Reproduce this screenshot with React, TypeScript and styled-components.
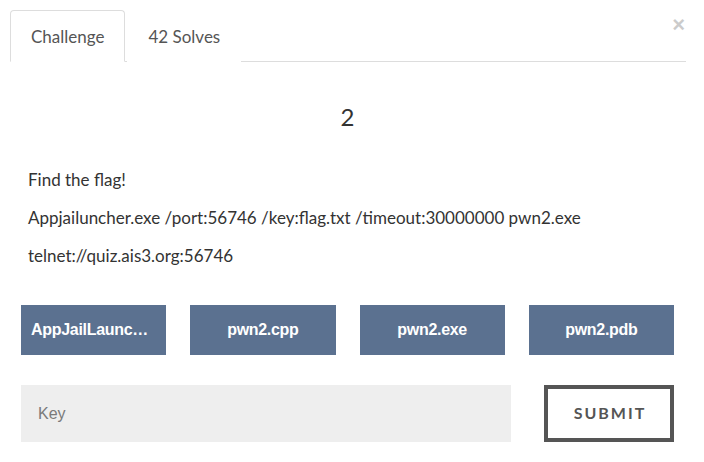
import React from "react";
import styled, { createGlobalStyle } from "styled-components";

const Global = createGlobalStyle`
  html, body { margin: 0; padding: 0; background: #fff; }
  body { font-family: Lato, "Open Sans", sans-serif; color: #333; }
  * { box-sizing: border-box; }
`;

const Modal = styled.div`
  position: relative;
  width: 704px;
  height: 462px;
  padding: 10px 18px 0 10px;
`;

const Close = styled.button`
  position: absolute;
  top: 14px;
  right: 19px;
  border: 0;
  background: none;
  padding: 0;
  font-family: "Liberation Sans", Arial, sans-serif;
  font-size: 22px;
  font-weight: 700;
  line-height: 1;
  color: #000;
  opacity: 0.2;
  cursor: pointer;
`;

const TabBar = styled.div`
  display: flex;
  gap: 2px;
  border-bottom: 1px solid #ddd;
`;

const Tab = styled.div<{ $active?: boolean }>`
  height: 52px;
  margin-bottom: -1px;
  padding: 0 20px;
  display: flex;
  align-items: center;
  font-size: 17px;
  color: #555;
  border: 1px solid ${(p) => (p.$active ? "#ddd" : "transparent")};
  border-bottom-color: ${(p) => (p.$active ? "#fff" : "transparent")};
  border-radius: 4px 4px 0 0;
  background: #fff;
`;

const Content = styled.div`
  margin: 0 12px 0 11px;
`;

const Title = styled.h3`
  margin: 0;
  padding-top: 41px;
  text-align: center;
  font-size: 24px;
  font-weight: 400;
  line-height: 28px;
  color: #333;
`;

const Description = styled.div`
  margin-top: 37px;
  padding-left: 7px;
  display: flex;
  flex-direction: column;
  gap: 14px;
`;

const Line = styled.p`
  margin: 0;
  font-size: 17px;
  line-height: 24px;
  color: #333;
`;

const Files = styled.div`
  margin-top: 37px;
  display: grid;
  grid-template-columns: repeat(4, 1fr);
  gap: 24px;
`;

const FileButton = styled.a`
  display: block;
  height: 50px;
  line-height: 50px;
  padding: 0 10px;
  background: #5b7190;
  color: #fff;
  text-align: center;
  font-family: "Liberation Sans", Arial, sans-serif;
  font-weight: 700;
  font-size: 16px;
  letter-spacing: -0.3px;
  white-space: nowrap;
  overflow: hidden;
  text-overflow: ellipsis;
  text-decoration: none;
`;

const SubmitRow = styled.div`
  margin-top: 30px;
  display: flex;
  gap: 33px;
`;

const KeyInput = styled.input`
  flex: 1;
  height: 57px;
  border: 0;
  background: #eee;
  padding: 0 17px;
  font-family: "Liberation Sans", Arial, sans-serif;
  font-size: 16px;
  color: #333;
  outline: none;
  &::placeholder { color: #7a7a7a; }
`;

const SubmitButton = styled.button`
  width: 130px;
  height: 57px;
  border: 4px solid #555;
  background: #fff;
  color: #555;
  font-family: Lato, sans-serif;
  font-weight: 700;
  font-size: 16px;
  letter-spacing: 2px;
  padding: 0 0 2px 2px;
  cursor: pointer;
`;

const files = ["AppJailLauncher.exe", "pwn2.cpp", "pwn2.exe", "pwn2.pdb"];

export default function App() {
  return (
    <>
      <Global />
      <Modal>
        <Close aria-label="Close">×</Close>
        <TabBar>
          <Tab $active>Challenge</Tab>
          <Tab>42 Solves</Tab>
        </TabBar>
        <Content>
          <Title>2</Title>
          <Description>
            <Line>Find the flag!</Line>
            <Line>Appjailuncher.exe /port:56746 /key:flag.txt /timeout:30000000 pwn2.exe</Line>
            <Line>telnet://quiz.ais3.org:56746</Line>
          </Description>
          <Files>
            {files.map((f) => (
              <FileButton key={f}>{f}</FileButton>
            ))}
          </Files>
          <SubmitRow>
            <KeyInput placeholder="Key" />
            <SubmitButton>SUBMIT</SubmitButton>
          </SubmitRow>
        </Content>
      </Modal>
    </>
  );
}
